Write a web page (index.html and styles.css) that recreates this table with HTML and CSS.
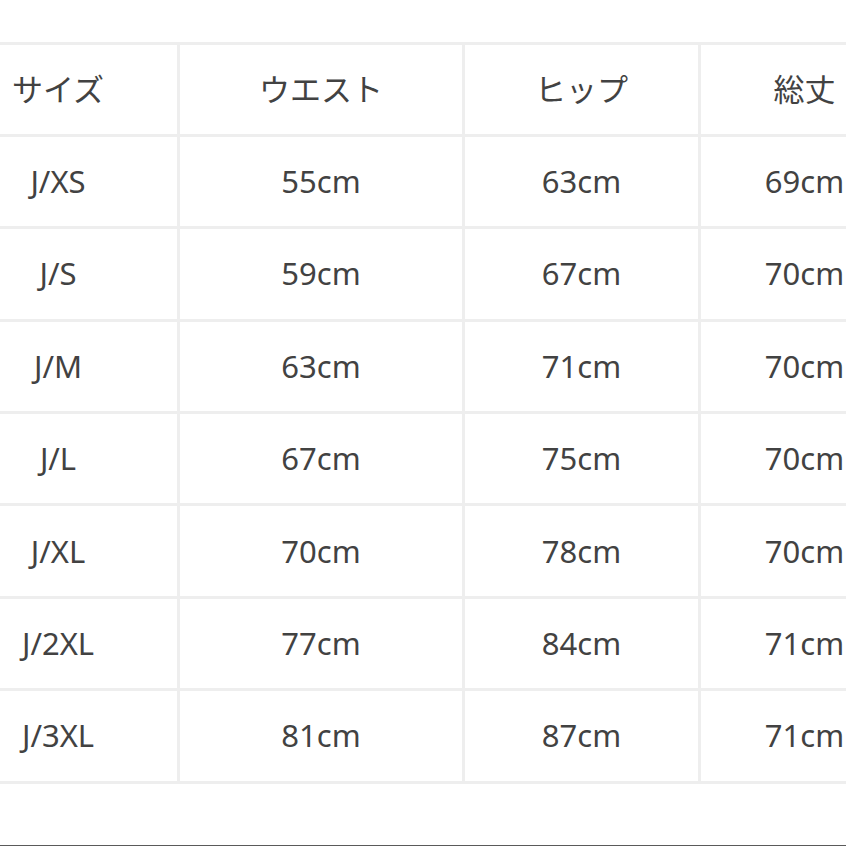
FILE: index.html
```html
<!DOCTYPE html>
<html lang="ja">
<head>
<meta charset="utf-8">
<link rel="stylesheet" href="styles.css">
</head>
<body>
<div class="page">
  <div class="table">
    <div class="cell">サイズ</div><div class="cell">ウエスト</div><div class="cell">ヒップ</div><div class="cell">総丈</div>
    <div class="cell">J/XS</div><div class="cell">55cm</div><div class="cell">63cm</div><div class="cell">69cm</div>
    <div class="cell">J/S</div><div class="cell">59cm</div><div class="cell">67cm</div><div class="cell">70cm</div>
    <div class="cell">J/M</div><div class="cell">63cm</div><div class="cell">71cm</div><div class="cell">70cm</div>
    <div class="cell">J/L</div><div class="cell">67cm</div><div class="cell">75cm</div><div class="cell">70cm</div>
    <div class="cell">J/XL</div><div class="cell">70cm</div><div class="cell">78cm</div><div class="cell">70cm</div>
    <div class="cell">J/2XL</div><div class="cell">77cm</div><div class="cell">84cm</div><div class="cell">71cm</div>
    <div class="cell">J/3XL</div><div class="cell">81cm</div><div class="cell">87cm</div><div class="cell">71cm</div>
  </div>
</div>
<div class="bottom-edge"></div>
</body>
</html>
```
FILE: styles.css
```css
html, body {
  margin: 0;
  padding: 0;
  background: #ffffff;
}
body {
  width: 846px;
  height: 846px;
  overflow: hidden;
  position: relative;
  font-family: "Noto Sans", "Noto Sans CJK JP", sans-serif;
  color: #424242;
}
.page {
  padding-top: 41.5px;
  margin-left: -64px;
}
.table {
  display: grid;
  grid-template-columns: 238px 282px 233px 207px;
  grid-auto-rows: 89.4px;
  gap: 3px;
  padding: 3px;
  background: #eeeeee;
  width: max-content;
}
.cell {
  background: #ffffff;
  display: flex;
  align-items: center;
  justify-content: center;
  font-size: 31px;
  line-height: 1;
}
.bottom-edge {
  position: absolute;
  left: 0;
  right: 0;
  bottom: 0;
  height: 1px;
  background: #5a5a5a;
}
```
